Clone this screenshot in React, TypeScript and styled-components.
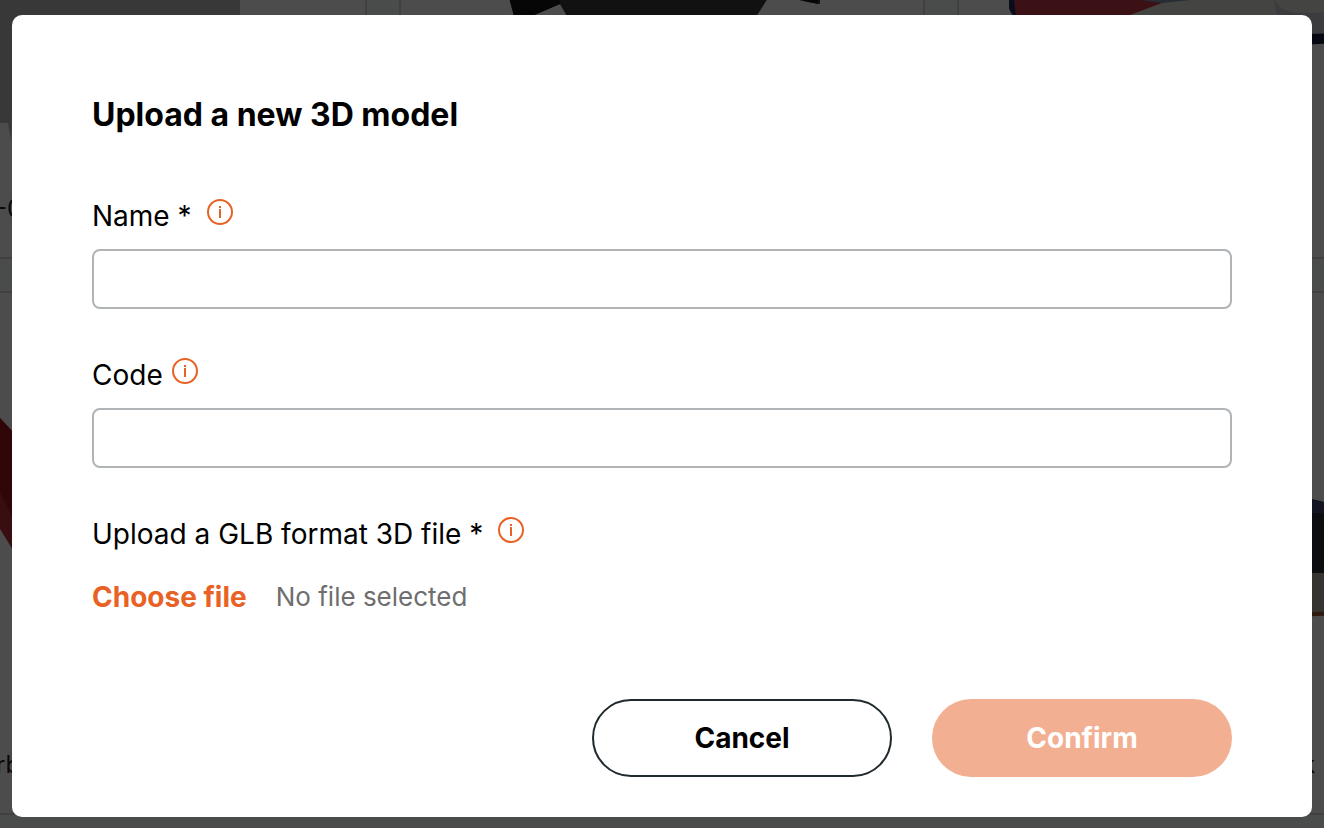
import React, { useRef, useState } from "react";
import styled, { createGlobalStyle } from "styled-components";

const orange = "#e86225";

const GlobalStyle = createGlobalStyle`
  *, *::before, *::after { box-sizing: border-box; }
  body { margin: 0; background: #f5fffc; color: #000; font-family: Inter, "Liberation Sans", sans-serif; }
  button, input { font-family: inherit; }
`;

const Page = styled.div`
  position: relative;
  min-height: 100vh;
  display: flex;
`;

const Gallery = styled.div`
  position: absolute;
  inset: 0;
  overflow: hidden;
  display: grid;
  grid-template-columns: repeat(3, 526px);
  grid-auto-rows: 524px;
  gap: 32px;
  justify-content: center;
  align-content: end;
  padding-bottom: 13px;
`;

const Card = styled.article`
  display: flex;
  flex-direction: column;
  overflow: hidden;
  border: 2px solid #d2d5d4;
  background: #fff;
`;

const Art = styled.svg`
  display: block;
  width: 522px;
  height: 428px;
  flex: none;
`;

const Caption = styled.p<{ $indent: number }>`
  margin: 0;
  padding: 28px 0 0 ${(p) => p.$indent}px;
  color: #222;
  font-size: 24px;
  line-height: 32px;
  white-space: nowrap;
`;

const Backdrop = styled.div`
  position: relative;
  flex: 1;
  display: flex;
  align-items: center;
  justify-content: center;
  padding: 15px 12px 11px;
  background: rgba(0, 0, 0, 0.7);
`;

const Dialog = styled.form`
  width: 100%;
  max-width: 1300px;
  padding: 80px 80px 40px;
  border-radius: 10px;
  background: #fff;
`;

const Title = styled.h1`
  margin: 0 0 61px;
  font-size: 32px;
  font-weight: 700;
  line-height: 40px;
`;

const Field = styled.div`
  margin-bottom: 46px;
`;

const LabelRow = styled.div<{ $required?: boolean }>`
  display: flex;
  align-items: flex-start;
  gap: ${(p) => (p.$required ? 15 : 9)}px;
  margin-bottom: 13px;
`;

const Label = styled.label`
  font-size: 28px;
  line-height: 40px;
`;

const InfoButton = styled.button`
  display: flex;
  margin: 3px 0 0;
  padding: 0;
  border: 0;
  background: none;
  color: ${orange};
  cursor: pointer;
`;

const TextInput = styled.input`
  display: block;
  width: 100%;
  height: 60px;
  padding: 0 16px;
  border: 2px solid #b0b4b7;
  border-radius: 8px;
  background: #fff;
  font-size: 28px;
`;

const FileRow = styled.div`
  display: flex;
  gap: 29px;
  margin: 23px 0 82px;
  line-height: 40px;
`;

const ChooseButton = styled.button`
  padding: 0;
  border: 0;
  background: none;
  color: ${orange};
  font-size: 28px;
  font-weight: 700;
  line-height: 40px;
  cursor: pointer;
`;

const FileStatus = styled.span`
  color: #6e6e6e;
  font-size: 26px;
`;

const Actions = styled.div`
  display: flex;
  justify-content: flex-end;
  gap: 40px;
`;

const ActionButton = styled.button<{ $primary?: boolean }>`
  width: 300px;
  height: 78px;
  border: 2px solid ${(p) => (p.$primary ? "transparent" : "#20292e")};
  border-radius: 39px;
  background: ${(p) => (p.$primary ? orange : "#fff")};
  color: ${(p) => (p.$primary ? "#fff" : "#000")};
  font-size: 28px;
  font-weight: 700;
  cursor: pointer;
  &:disabled { opacity: 0.5; cursor: default; }
`;

function Info({ about }: { about: string }) {
  return (
    <InfoButton type="button" aria-label={`About ${about}`}>
      <svg width="26" height="26" viewBox="0 0 26 26" aria-hidden="true">
        <circle cx="13" cy="13" r="12" fill="none" stroke="currentColor" strokeWidth="2" />
        <path d="M12 7h2v2h-2zM12 10h2v9h-2z" fill="currentColor" />
      </svg>
    </InfoButton>
  );
}

function Products() {
  return (
    <Gallery aria-hidden="true">
      <Card>
        <Art viewBox="-157 -263 522 428">
          <path d="M-157-263H240V80H13L11 140 8 123H-157z" fill="#bdbdbd" />
        </Art>
        <Caption $indent={153}>-0</Caption>
      </Card>
      <Card>
        <Art viewBox="401 -263 522 428">
          <path d="M505-20 514 16H532L560 4 568 18H756L768-2 820 4V-20z" fill="#3a3a3a" />
          <path d="M509-2 514 16H532L560 4V-20H505zM790-3 818 4V-20H780z" fill="#15151a" />
          <path d="M766 2 790-2 816 4H840V18H755z" fill="#fff" />
        </Art>
      </Card>
      <Card>
        <Art viewBox="959 -263 522 428">
          <path d="M1009-20V8Q1012 16 1024 20H1130L1174 2 1150-20z" fill="#c53a47" />
          <path d="M1009-20V8Q1011 15 1016 17L1012-20z" fill="#1f2c55" />
          <path d="M1130 15 1162 3 1210-8H1340V35H1150z" fill="#e5e4df" />
          <path d="M1140 0 1162 3 1210-2V-20H1130z" fill="#8598ae" />
          <path d="M1274-2Q1280 12 1298 13L1340 12V33H1308L1276 14z" fill="#c9c9d2" />
          <path d="M1300 34 1340 33V43L1300 45z" fill="#17213e" />
        </Art>
      </Card>
      <Card>
        <Art viewBox="-157 293 522 428">
          <path d="M-20 400 0 418 13 432V550L0 529-20 500z" fill="#bd3038" />
          <path d="M-20 400 0 418 13 432V518L0 493z" fill="#a6161b" />
        </Art>
        <Caption $indent={153}>rb</Caption>
      </Card>
      <Card />
      <Card>
        <Art viewBox="959 293 522 428">
          <path d="M1290 497Q1312 496 1340 508V575H1290z" fill="#292c39" />
          <path d="M1300 499Q1314 498 1340 508V513H1311z" fill="#41446f" />
          <path d="M1290 573H1340V613H1290z" fill="#b1aea0" />
          <path d="M1290 613 1340 611V615L1290 617z" fill="#9b5429" />
        </Art>
        <Caption $indent={343}>k</Caption>
      </Card>
    </Gallery>
  );
}

export default function App() {
  const fileInput = useRef<HTMLInputElement>(null);
  const [name, setName] = useState("");
  const [code, setCode] = useState("");
  const [file, setFile] = useState("");

  return (
    <>
      <GlobalStyle />
      <Page>
        <Products />
        <Backdrop>
          <Dialog role="dialog" aria-labelledby="title" onSubmit={(e) => e.preventDefault()}>
            <Title id="title">Upload a new 3D model</Title>
            <Field>
              <LabelRow $required>
                <Label htmlFor="name">Name *</Label>
                <Info about="name" />
              </LabelRow>
              <TextInput id="name" value={name} onChange={(e) => setName(e.target.value)} />
            </Field>
            <Field>
              <LabelRow>
                <Label htmlFor="code">Code</Label>
                <Info about="code" />
              </LabelRow>
              <TextInput id="code" value={code} onChange={(e) => setCode(e.target.value)} />
            </Field>
            <LabelRow $required>
              <Label htmlFor="file">Upload a GLB format 3D file *</Label>
              <Info about="file format" />
            </LabelRow>
            <FileRow>
              <input
                ref={fileInput}
                id="file"
                type="file"
                accept=".glb"
                hidden
                onChange={(e) => setFile(e.target.files?.[0]?.name ?? "")}
              />
              <ChooseButton type="button" onClick={() => fileInput.current?.click()}>
                Choose file
              </ChooseButton>
              <FileStatus>{file || "No file selected"}</FileStatus>
            </FileRow>
            <Actions>
              <ActionButton type="button">Cancel</ActionButton>
              <ActionButton type="submit" $primary disabled={!name || !file}>
                Confirm
              </ActionButton>
            </Actions>
          </Dialog>
        </Backdrop>
      </Page>
    </>
  );
}
